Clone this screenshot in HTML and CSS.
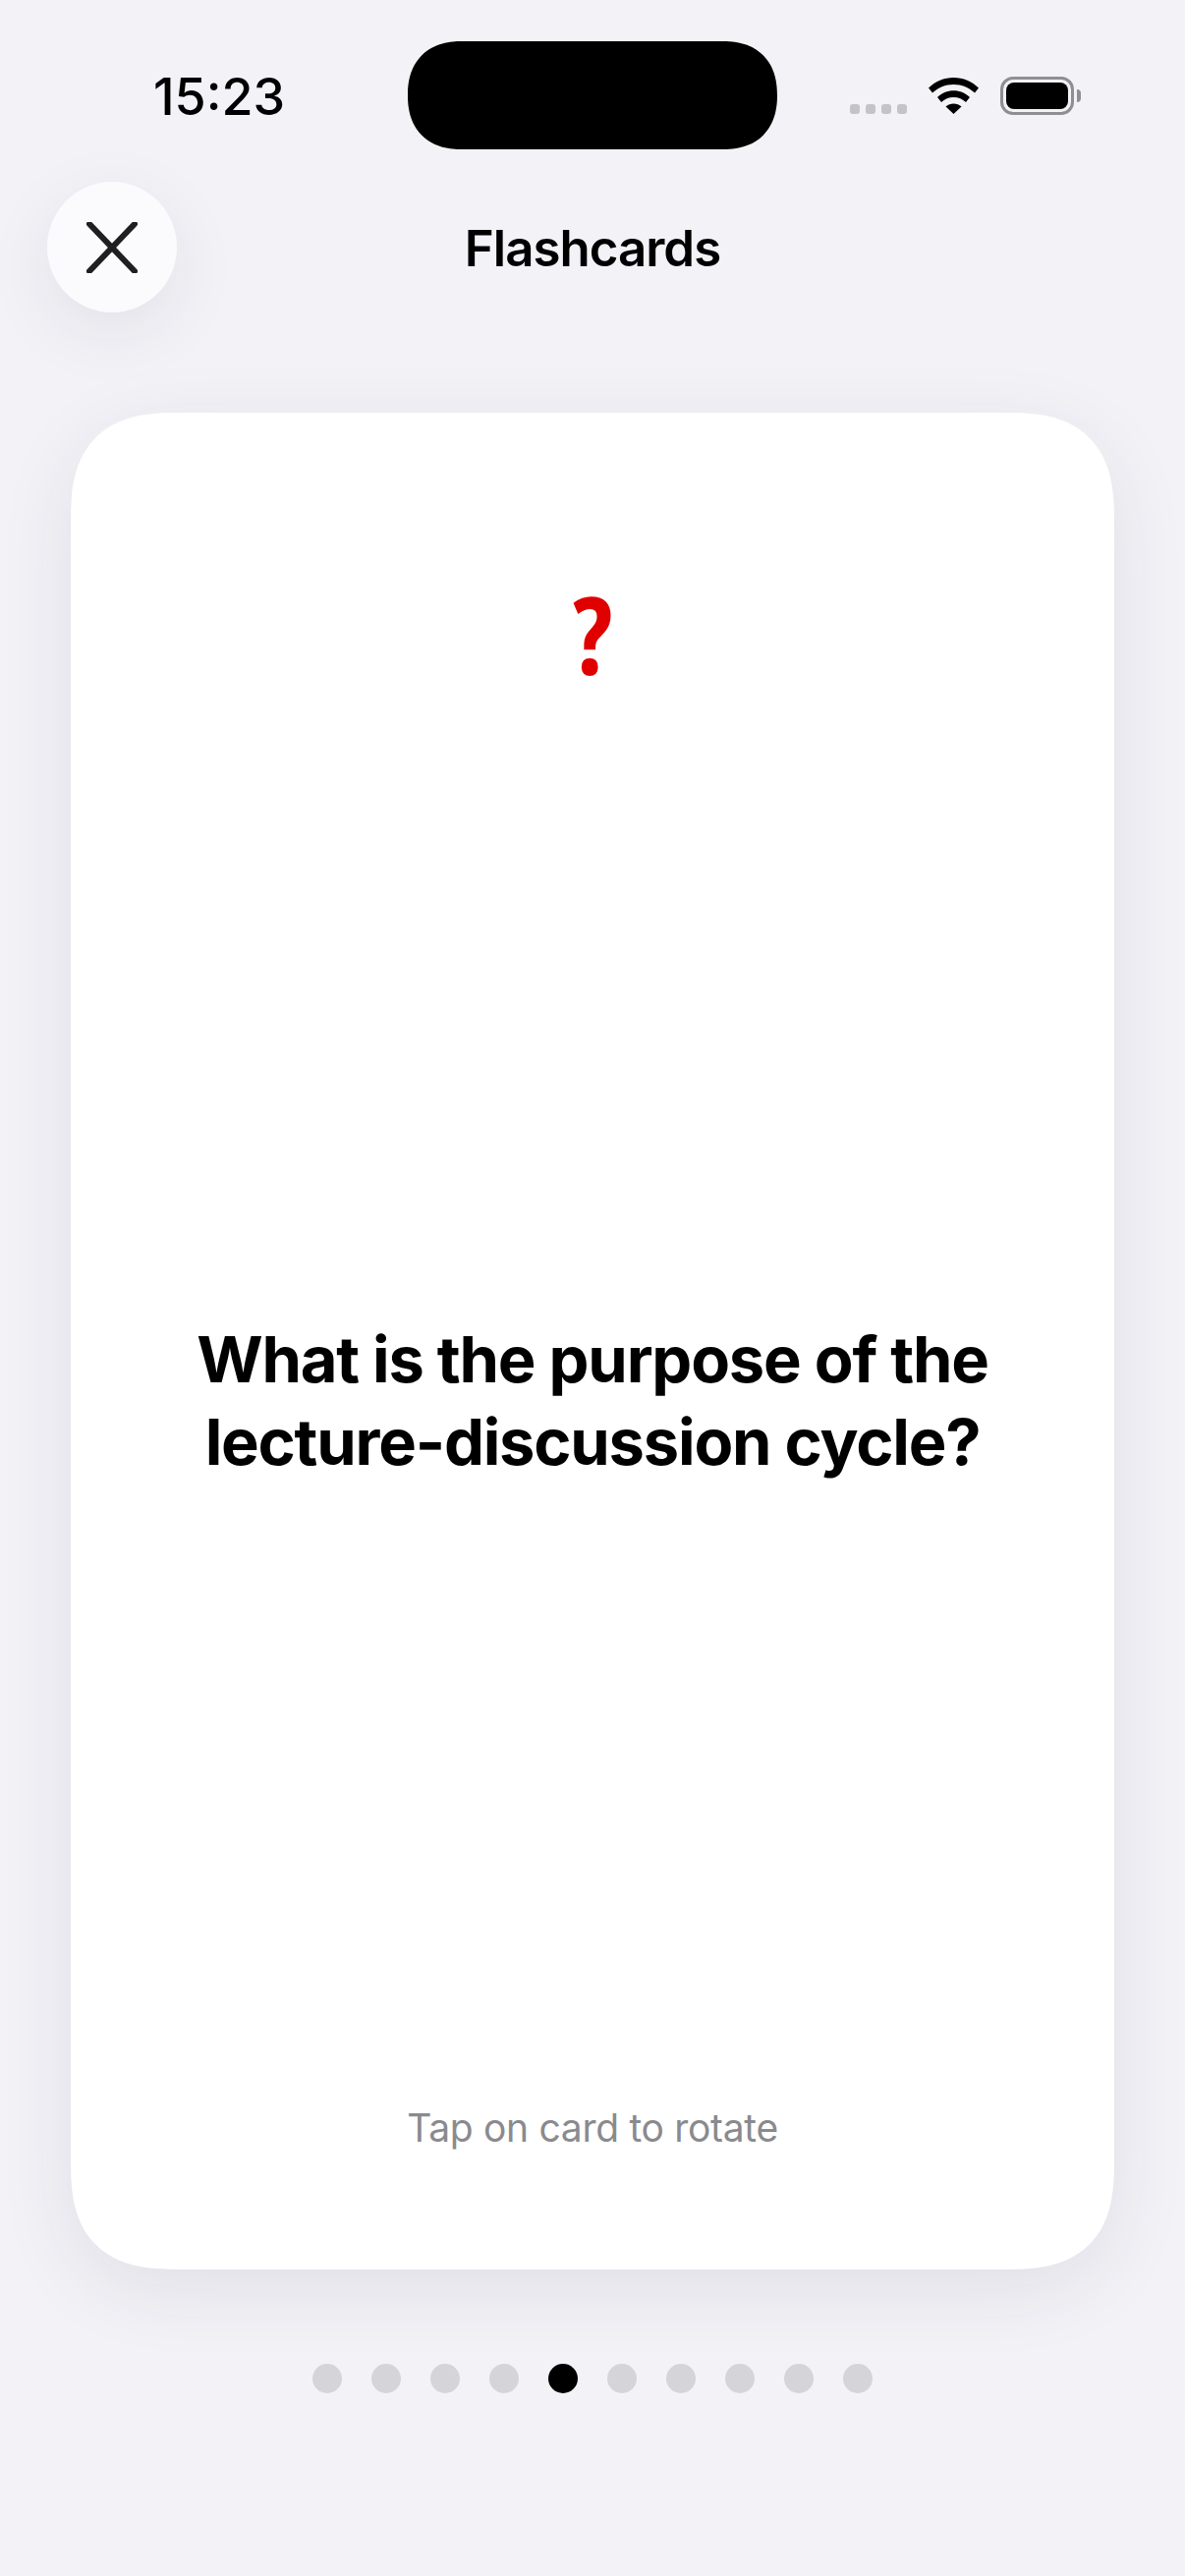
FILE: index.html
```html
<!DOCTYPE html>
<html lang="en">
<head>
    <meta charset="UTF-8">
    <meta name="viewport" content="width=device-width, initial-scale=1.0">
    <title>Flashcards</title>
    <link rel="stylesheet" href="styles.css">
</head>
<body>

    <!-- Status bar -->
    <div class="status-bar">
        <div class="time">15:23</div>
        <div class="island"></div>
        <div class="status-icons">
            <div class="signal">
                <span></span><span></span><span></span><span></span>
            </div>
            <svg class="wifi" width="51" height="37" viewBox="0 0 51 37">
                <path d="M0 10.5C6.8 3.9 15.7 0 25.5 0S44.200 3.900 51 10.500L47 15.500C41.400 10.200 33.900 6.900 25.500 6.900S9.600 10.200 4 15.500Z" fill="#000"/>
                <path d="M9 20C13.300 15.900 19.100 13.300 25.500 13.300S37.700 15.900 42 20L38 25C34.700 21.900 30.300 20 25.500 20S16.300 21.900 13 25Z" fill="#000"/>
                <path d="M17.500 29.500C19.700 27.600 22.500 26.500 25.500 26.500S31.300 27.600 33.500 29.500L25.500 37Z" fill="#000"/>
            </svg>
            <div class="battery">
                <div class="battery-body"><div class="battery-fill"></div></div>
                <div class="battery-cap"></div>
            </div>
        </div>
    </div>

    <!-- Header -->
    <div class="header">
        <button class="close-btn" aria-label="Close">
            <svg width="52" height="52" viewBox="0 0 52 52">
                <path d="M3 2L49 50M49 2L3 50" stroke="#1f1f21" stroke-width="6" stroke-linecap="round" fill="none"/>
            </svg>
        </button>
        <h1>Flashcards</h1>
    </div>

    <!-- Card -->
    <div class="card">
        <div class="mark">?</div>
        <div class="question">What is the purpose of the<br>lecture-discussion cycle?</div>
        <div class="hint">Tap on card to rotate</div>
    </div>

    <!-- Pager dots -->
    <div class="dots">
        <span class="dot"></span>
        <span class="dot"></span>
        <span class="dot"></span>
        <span class="dot"></span>
        <span class="dot active"></span>
        <span class="dot"></span>
        <span class="dot"></span>
        <span class="dot"></span>
        <span class="dot"></span>
        <span class="dot"></span>
    </div>

</body>
</html>
```

FILE: styles.css
```css
/* General reset */
* {
    margin: 0;
    padding: 0;
    box-sizing: border-box;
}

body {
    width: 1206px;
    height: 2622px;
    background-color: #F2F2F7;
    font-family: 'Inter', 'Liberation Sans', sans-serif;
    color: #000000;
    overflow: hidden;
}

/* Status bar */
.status-bar {
    display: grid;
    grid-template-columns: 415px 376px 1fr;
    grid-template-rows: 110px;
    margin-top: 42px;
}

.time {
    padding-left: 156px;
    font-size: 52px;
    font-weight: 550;
    line-height: 114px;
}

.island {
    background: #000000;
    border-radius: 55px;
    corner-shape: superellipse(1.2);
}

.status-icons {
    display: flex;
    align-items: flex-start;
    padding: 36px 0 0 74px;
}

.signal {
    display: flex;
    gap: 6px;
    margin-top: 28px;
    margin-right: 22px;
}

.signal span {
    width: 10px;
    height: 10px;
    border-radius: 3px;
    background: #C4C4C8;
}

.wifi {
    margin-top: 1px;
    margin-right: 22px;
}

.battery {
    display: flex;
    align-items: center;
}

.battery-body {
    width: 75px;
    height: 39px;
    padding: 3px;
    border: 3px solid #8E8E93;
    border-radius: 13px;
}

.battery-fill {
    height: 100%;
    background: #000000;
    border-radius: 8px;
}

.battery-cap {
    width: 4px;
    height: 13px;
    margin-left: 3px;
    background: #8E8E93;
    border-radius: 0 4px 4px 0;
}

/* Header */
.header {
    display: grid;
    grid-template-columns: 132px 1fr 132px;
    align-items: center;
    margin-top: 33px;
    padding: 0 48px;
}

.close-btn {
    display: flex;
    justify-content: center;
    align-items: center;
    width: 132px;
    height: 133px;
    border: none;
    border-radius: 50%;
    background: #FBFBFD;
    box-shadow: 0 20px 70px rgba(40, 40, 70, 0.08);
}

h1 {
    padding-top: 2px;
    font-size: 51px;
    font-weight: 600;
    letter-spacing: -1px;
    text-align: center;
}

/* Card */
.card {
    display: flex;
    flex-direction: column;
    align-items: center;
    width: 1062px;
    height: 1890px;
    margin: 102px 0 0 72px;
    background: #FFFFFF;
    border-radius: 110px;
    corner-shape: superellipse(1.4);
    box-shadow: 0 20px 80px rgba(40, 40, 70, 0.09);
}

.mark {
    margin-top: 155px;
    font-family: 'Open Sans', sans-serif;
    font-size: 109px;
    font-stretch: 85%;
    font-weight: 700;
    line-height: 140px;
    color: #E00000;
}

.question {
    margin-top: 627px;
    font-size: 65px;
    font-weight: 700;
    letter-spacing: -1.2px;
    line-height: 84px;
    text-align: center;
}

.hint {
    margin-top: auto;
    margin-bottom: 120px;
    font-size: 39px;
    letter-spacing: -0.3px;
    line-height: 48px;
    color: #8A8A8E;
}

/* Pager dots */
.dots {
    display: flex;
    justify-content: center;
    gap: 30px;
    margin-top: 96px;
}

.dot {
    width: 30px;
    height: 30px;
    border-radius: 50%;
    background: #D4D4D9;
}

.dot.active {
    background: #000000;
}
```
